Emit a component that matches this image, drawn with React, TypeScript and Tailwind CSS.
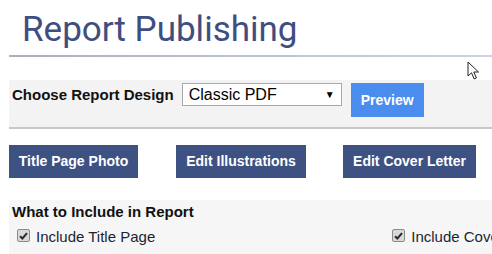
export default function App() {
  return (
    <div className="relative w-[492px] h-[254px] overflow-hidden bg-white font-['Liberation_Sans',Arial,sans-serif] text-[#111]">
      {/* Page title */}
      <h1 className="pt-[13px] pl-[22px] font-['Roboto',sans-serif] text-[35px] leading-[34px] text-[#3f4e7f] whitespace-nowrap">
        Report Publishing
      </h1>
      <div className="ml-[9px] mt-[8px] h-[2px] bg-linear-to-r from-[#aab0bd] to-[#ccd4e4]" />

      {/* Design chooser */}
      <div className="ml-[9px] mt-[23px] h-[49px] bg-[#f3f3f3] border-b-[2px] border-[#c6c8cd] flex items-start pt-[3px] pl-[3px]">
        <span className="text-[15px] leading-[23px] font-bold whitespace-nowrap">Choose Report Design</span>
        <div className="ml-[8px] w-[160px] h-[23px] bg-white border border-[#a9a9a9] flex items-center justify-between pl-[6px] pr-[6px]">
          <span className="text-[16px] leading-[21px] text-black">Classic PDF</span>
          <span className="text-[10px] leading-none text-black">▼</span>
        </div>
        <button className="ml-[9px] w-[73px] h-[34px] bg-[#4a8def] text-white text-[14px] font-bold flex items-center justify-center">
          Preview
        </button>
      </div>

      {/* Action buttons */}
      <div className="ml-[9px] mt-[16px] flex">
        <ActionButton className="w-[129px]">Title Page Photo</ActionButton>
        <ActionButton className="ml-[38px] w-[130px]">Edit Illustrations</ActionButton>
        <ActionButton className="ml-[37px] w-[133px]">Edit Cover Letter</ActionButton>
      </div>

      {/* Include options */}
      <div className="ml-[9px] mt-[22px] h-[60px] bg-[#f6f6f6] pt-[2px]">
        <div className="pl-[3px] text-[15px] leading-[20px] font-bold whitespace-nowrap">What to Include in Report</div>
        <div className="mt-[5px] flex items-start whitespace-nowrap">
          <CheckItem className="ml-[8px]">Include Title Page</CheckItem>
          <CheckItem className="ml-[237px]">Include Cover Letter</CheckItem>
        </div>
      </div>

      {/* Mouse pointer */}
      <svg className="absolute left-[467px] top-[61px]" width="14" height="20" viewBox="0 0 14 20">
        <path d="M1 1 L1 15 L4.5 11.8 L7.2 18 L9.4 17 L6.8 11 L11.5 11 Z" fill="white" stroke="#222" strokeWidth="1" strokeLinejoin="round" />
      </svg>
    </div>
  );
}

function ActionButton({ className, children }: { className: string; children: React.ReactNode }) {
  return (
    <button className={`${className} h-[33px] bg-[#3e5183] text-white text-[14px] font-bold flex items-center justify-center whitespace-nowrap`}>
      {children}
    </button>
  );
}

function CheckItem({ className, children }: { className: string; children: React.ReactNode }) {
  return (
    <div className={`${className} flex items-start`}>
      <span className="mt-[2px] w-[13px] h-[13px] rounded-[2px] border border-[#8a8a8a] bg-[#d9d9d9] flex items-center justify-center">
        <svg width="9" height="8" viewBox="0 0 9 8">
          <path d="M1 4.2 L3.4 6.5 L8 1.2" fill="none" stroke="#2a2a2a" strokeWidth="2" />
        </svg>
      </span>
      <span className="ml-[6px] text-[15px] leading-[20px] text-[#1c1f33]">{children}</span>
    </div>
  );
}
